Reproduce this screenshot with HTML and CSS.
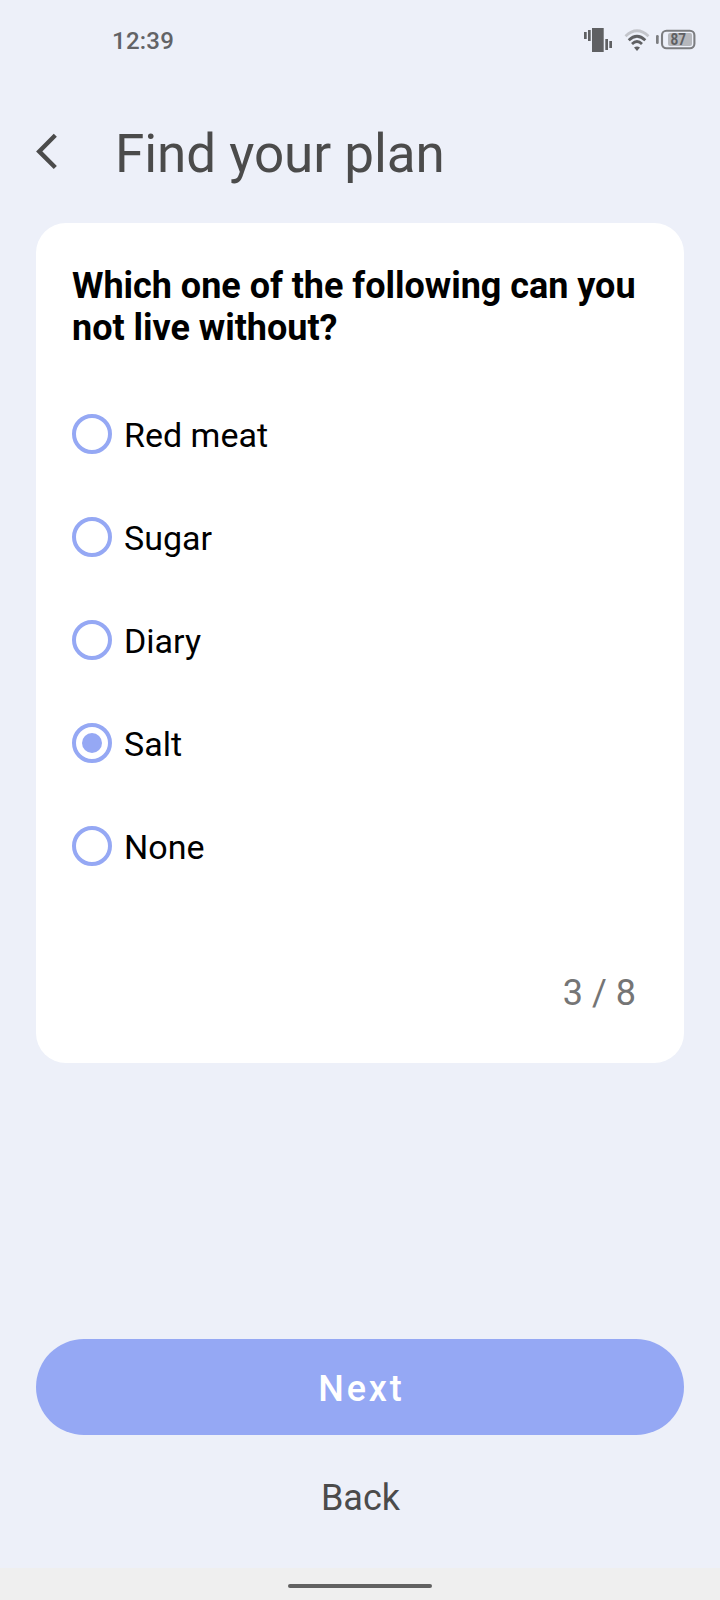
FILE: index.html
```html
<!DOCTYPE html>
<html lang="en">
<head>
<meta charset="utf-8">
<title>Find your plan</title>
<link rel="stylesheet" href="styles.css">
</head>
<body>
<div class="screen">
  <div class="status">
    <span class="time">12:39</span>
    <svg class="status-icons" width="114" height="28" viewBox="0 0 114 28">
      <g fill="#5f6063">
        <rect x="0" y="6" width="2.7" height="7"/>
        <rect x="4" y="4" width="2.7" height="11"/>
        <rect x="8" y="2" width="11.7" height="24"/>
        <rect x="21.3" y="13" width="2.7" height="11"/>
        <rect x="25.3" y="15" width="2.7" height="7"/>
      </g>
      <g fill="none" stroke="#5f6063" stroke-width="2.8">
        <path stroke="#c3c5cb" d="M41.5 10.2 Q53 -0.8 64.5 10.2"/>
        <path d="M44.7 14.2 Q53 6.2 61.3 14.2"/>
        <path d="M48 18 Q53 13.2 58 18"/>
      </g>
      <path fill="#5f6063" d="M50 21.5 Q53 19.5 56 21.5 L53 25 Z"/>
      <rect x="72" y="9" width="2.7" height="9" rx="1.3" fill="#7c7d80"/>
      <rect x="78" y="4.7" width="32.4" height="17.6" rx="4.5" fill="none" stroke="#7c7d80" stroke-width="2.1"/>
      <rect x="84" y="7" width="24" height="13" rx="2" fill="#b6b8bd"/>
      <text class="battery" x="86.5" y="19.2" textLength="15.5" lengthAdjust="spacingAndGlyphs">87</text>
    </svg>
  </div>
  <header class="header">
    <svg class="chevron" width="22" height="38" viewBox="0 0 22 38"><path d="M19.3 2.3 L3.2 18.4 L19.3 34.5" fill="none" stroke="#4b4b4b" stroke-width="4.4"/></svg>
    <h1 class="title">Find your plan</h1>
  </header>
  <main class="card">
    <h2 class="question">Which one of the following can you not live without?</h2>
    <div class="options">
      <label class="option"><span class="radio"></span><span class="label">Red meat</span></label>
      <label class="option"><span class="radio"></span><span class="label">Sugar</span></label>
      <label class="option"><span class="radio"></span><span class="label">Diary</span></label>
      <label class="option"><span class="radio selected"></span><span class="label">Salt</span></label>
      <label class="option"><span class="radio"></span><span class="label">None</span></label>
    </div>
    <div class="counter">3 / 8</div>
  </main>
  <footer class="actions">
    <button class="next">Next</button>
    <button class="back">Back</button>
  </footer>
  <div class="navbar"><span class="pill"></span></div>
</div>
</body>
</html>
```
FILE: styles.css
```css
* { box-sizing: border-box; }
body { margin: 0; font-family: Roboto, sans-serif; }
.screen {
  width: 720px;
  height: 1600px;
  display: flex;
  flex-direction: column;
  background: #edf0f9;
}
.status {
  height: 80px;
  padding: 0 22px 0 112px;
  display: flex;
  align-items: center;
  justify-content: space-between;
}
.time { font-size: 24px; font-weight: 500; line-height: 28px; letter-spacing: 0.25px; color: #626366; padding-top: 2px; }
.battery { font-size: 17px; font-weight: 700; fill: #5f6063; }
.header {
  height: 143px;
  padding: 53px 36px 0;
  display: flex;
  align-items: flex-start;
  gap: 57px;
}
.title { margin: -9px 0 0; font-size: 53px; line-height: 60px; font-weight: 400; letter-spacing: -0.05px; color: #4b4b4b; }
.card {
  height: 840px;
  margin: 0 36px;
  padding: 42px 36px 0;
  border-radius: 30px;
  background: #fff;
}
.question { margin: 0; font-size: 36px; line-height: 42px; font-weight: 700; letter-spacing: -0.03px; color: #000; }
.options { margin-top: 65px; display: flex; flex-direction: column; gap: 63px; }
.option { display: flex; align-items: center; gap: 12px; height: 40px; }
.radio {
  width: 40px;
  height: 40px;
  border: 4px solid #95a8f4;
  border-radius: 50%;
  display: grid;
  place-items: center;
}
.selected::after { content: ""; width: 20px; height: 20px; border-radius: 50%; background: #95a8f4; }
.label { font-size: 34px; line-height: 40px; padding-top: 2px; color: #000; }
.counter { margin: 106px 12px 0 0; text-align: right; font-size: 36px; line-height: 42px; color: #757575; }
.actions { margin-top: 276px; padding: 0 36px; display: flex; flex-direction: column; gap: 36px; }
button { border: 0; font-family: inherit; font-size: 36px; }
.next {
  height: 96px;
  padding: 3px 0 0 3px;
  border-radius: 48px;
  background: #95a8f4;
  color: #fff;
  font-weight: 500;
  letter-spacing: 2.9px;
}
.back { height: 54px; padding: 0 0 0 1px; background: none; color: #4b4b4b; }
.navbar { height: 32px; margin-top: auto; padding-top: 16px; background: #efefef; display: flex; justify-content: center; }
.pill { width: 144px; height: 4px; border-radius: 2px; background: #616161; }
```
